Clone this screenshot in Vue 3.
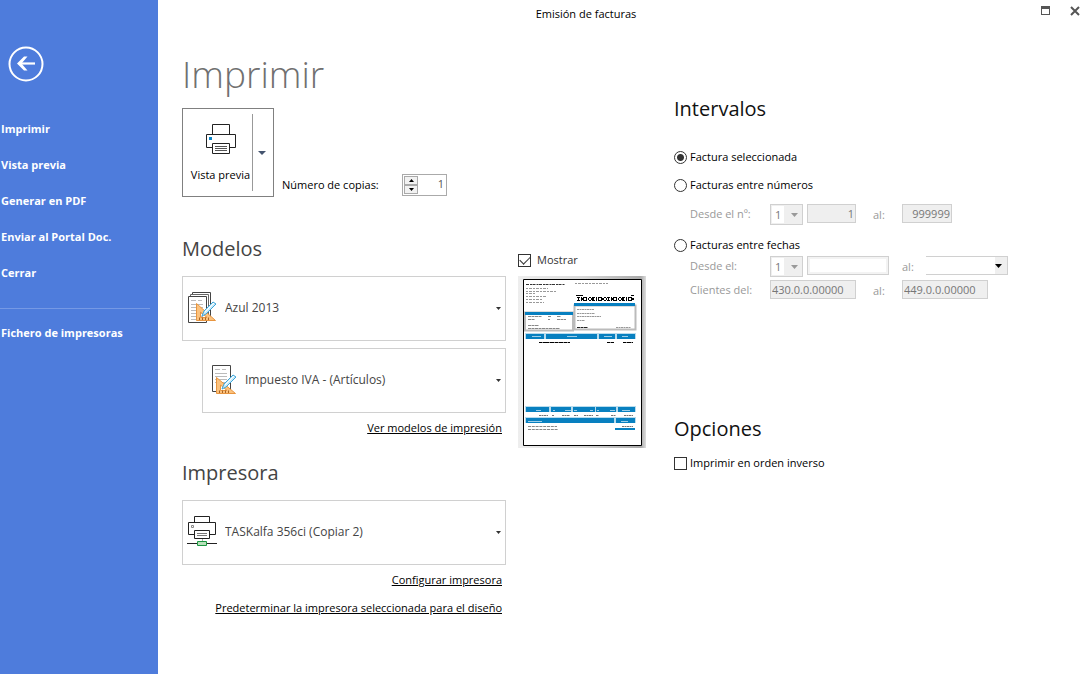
<script setup>
import { ref } from 'vue'

const menu = ['Imprimir', 'Vista previa', 'Generar en PDF', 'Enviar al Portal Doc.', 'Cerrar']
const copies = ref('1')
const showPreview = ref(true)
const range = ref('selected')
const reverse = ref(false)

const headCells = [
  [8, 53, 18], [28, 53, 51], [81, 53, 16], [99, 53, 18],
]
const totalCells = [
  [8, 127, 23], [33, 127, 20], [55, 127, 22], [78, 127, 20], [100, 127, 17],
]
const cellInk = [
  'M14 56.500h9', 'M49 56.500h10', 'M86 56.500h8', 'M104 56.500h6',
  'M18 130.500h5', 'M35 130.500h2M47 130.500h6', 'M56 130.500h3M72 130.500h3', 'M79 130.500h2M92 130.500h5', 'M104 130.500h8',
]
</script>

<template>
  <div class="window">
    <aside class="side">
      <button class="back" aria-label="Volver">
        <svg width="36" height="36" viewBox="0 0 36 36" fill="none" stroke="#fff">
          <circle cx="18" cy="18" r="16.500" stroke-width="2" />
          <path d="M27 17.500H11" stroke-width="2.200" />
          <path d="M9 17.500L16 10.500H19.500L13.500 17.500L19.500 24.500H16Z" fill="#fff" stroke="none" />
        </svg>
      </button>
      <nav class="menu">
        <a v-for="m in menu" :key="m" href="#">{{ m }}</a>
        <hr />
        <a href="#">Fichero de impresoras</a>
      </nav>
    </aside>

    <div class="page">
      <header class="bar">
        <span class="caption">Emisión de facturas</span>
        <div class="sys">
          <button aria-label="Maximizar">
            <svg width="9" height="9" viewBox="0 0 9 9"><path d="M0 0h9v9H0zM1 3v5h7V3z" fill="#555" fill-rule="evenodd" /></svg>
          </button>
          <button aria-label="Cerrar ventana">
            <svg width="10" height="10" viewBox="0 0 10 10"><path d="M1 1L9 9M9 1L1 9" stroke="#555" stroke-width="2" /></svg>
          </button>
        </div>
      </header>

      <main class="content">
        <section class="left">
          <h1>Imprimir</h1>
          <div class="print-row">
            <div class="split">
              <button class="print">
                <svg width="30" height="30" viewBox="0 0 30 30" fill="#fff" stroke="#222">
                  <path d="M6.500 10V.5h17V10" />
                  <path d="M.5 10.500h29v13H.5z" />
                  <path d="M6.500 19.500h17v10h-17z" />
                  <path d="M9 22.500h12M9 24.500h12M9 26.500h12" stroke="#555" />
                  <path d="M3 13h3v3H3z" fill="#0a84c8" stroke="none" />
                </svg>
                <span>Vista previa</span>
              </button>
              <button class="more" aria-label="Más opciones">
                <svg width="8" height="4" viewBox="0 0 8 4"><path d="M0 0h8L4 4z" fill="#44546f" /></svg>
              </button>
            </div>
            <label for="copies">Número de copias:</label>
            <div class="spin">
              <div class="steps">
                <button aria-label="Más copias"><svg width="5" height="3" viewBox="0 0 5 3"><path d="M0 3L2.500 0L5 3z" /></svg></button>
                <button aria-label="Menos copias"><svg width="5" height="3" viewBox="0 0 5 3"><path d="M0 0h5L2.500 3z" /></svg></button>
              </div>
              <input id="copies" v-model="copies" type="text" />
            </div>
          </div>

          <h2>Modelos</h2>
          <div class="combo">
            <svg class="icon" width="30" height="32" viewBox="0 0 30 32">
              <path d="M5.500 4V1.500h18V26" fill="#fff" stroke="#444" />
              <path d="M3.500 6V3.500h18V28" fill="#fff" stroke="#666" />
              <path d="M1.500 5.500h18v26h-18z" fill="#fff" stroke="#444" />
              <path d="M4 9.500h5M11 9.500h4M4 13.500h12M4 16.500h12M4 19.500h12M4 22.500h12M4 25.500h12M4 28.500h6" stroke="#bbb" />
              <path d="M9.500 12.500v17h19zM13.500 21l6.500 5.500h-6.500z" fill="#fbc27e" stroke="#e8953f" fill-rule="evenodd" />
              <path d="M12.500 29v-2.500M15.500 29v-2.500M18.500 29v-2.500M21.500 29v-2.500" stroke="#a96525" />
              <path d="M15 25l2-5L26 11l3 2L19 23z" fill="#c9ebfa" stroke="#3da4d8" />
              <path d="M18 21L27 12" stroke="#fff" />
            </svg>
            <select aria-label="Modelo"><option>Azul 2013</option></select>
            <svg class="arrow" width="5" height="3" viewBox="0 0 5 3"><path d="M0 0h5L2.500 3z" fill="#333" /></svg>
          </div>
          <div class="combo inset">
            <svg class="icon" width="30" height="32" viewBox="0 0 30 32">
              <path d="M5.500 2.500h18v26h-18z" fill="#fff" stroke="#444" />
              <path d="M8 6.500h5M15 6.500h4M8 10.500h12M8 13.500h12M8 16.500h12M8 19.500h12" stroke="#bbb" />
              <path d="M9.500 14.500v16h19zM13.500 22l6.500 5.500h-6.500z" fill="#fbc27e" stroke="#e8953f" fill-rule="evenodd" />
              <path d="M12.500 30v-2.500M15.500 30v-2.500M18.500 30v-2.500M21.500 30v-2.500" stroke="#a96525" />
              <path d="M15 26l2-5L26 12l3 2L19 24z" fill="#c9ebfa" stroke="#3da4d8" />
              <path d="M18 22L27 13" stroke="#fff" />
            </svg>
            <select aria-label="Diseño"><option>Impuesto IVA - (Artículos)</option></select>
            <svg class="arrow" width="5" height="3" viewBox="0 0 5 3"><path d="M0 0h5L2.500 3z" fill="#333" /></svg>
          </div>
          <a class="link models" href="#">Ver modelos de impresión</a>

          <h2>Impresora</h2>
          <div class="combo">
            <svg class="icon" width="30" height="32" viewBox="0 0 30 32" fill="#fff" stroke="#222">
              <path d="M7.500 7V1.500h15V7" />
              <path d="M1.500 7.500h27v12h-27z" />
              <path d="M7.500 15.500h15v8h-15z" />
              <path d="M10 18.500h10M10 20.500h10" stroke="#777" />
              <path d="M4.500 10.500h2v2h-2z" stroke="#888" />
              <path d="M15.500 24v3" stroke="#aaa" />
              <path d="M0 28.500h30" />
              <path d="M10.500 26.500h9v4h-9z" fill="#b7dfb9" stroke="#1a9641" />
            </svg>
            <select aria-label="Impresora"><option>TASKalfa 356ci (Copiar 2)</option></select>
            <svg class="arrow" width="5" height="3" viewBox="0 0 5 3"><path d="M0 0h5L2.500 3z" fill="#333" /></svg>
          </div>
          <a class="link" href="#">Configurar impresora</a>
          <a class="link" href="#">Predeterminar la impresora seleccionada para el diseño</a>
        </section>

        <section class="preview">
          <label class="tick show"><input v-model="showPreview" type="checkbox" />Mostrar</label>
          <svg v-if="showPreview" class="sheet" viewBox="0 0 128 172" fill="none">
            <defs>
              <linearGradient id="edge" x1="0" y1="0" x2="1" y2="0">
                <stop offset="0" stop-color="#eee" /><stop offset=".5" stop-color="#d8d8d8" /><stop offset=".96" stop-color="#aaa" /><stop offset="1" stop-color="#ddd" />
              </linearGradient>
            </defs>
            <path d="M0 0h128v172H0z" fill="url(#edge)" />
            <path d="M5.500 3.500h118v166H5.500z" fill="#fff" stroke="#000" />
            <path d="M8 8.500h39" stroke="#333" stroke-dasharray="3 1 2 .5" />
            <path d="M57 7.500h33M8 12.500h22M8 15.500h30M8 17.500h9M8 20.500h21M8 23.500h16M8 26.500h18" stroke="#999" stroke-dasharray="2 1 3 1" />
            <path d="M58 19.500h7M113 19.500h3" stroke="#000" />
            <path d="M59 21.500h57M59 24.500h57" stroke="#000" stroke-dasharray="3 1 1 1 4 2 2 1" />
            <path d="M60 23h56" stroke="#000" stroke-width="2" stroke-dasharray="1 2 3 2 1 1" />
            <path d="M7 36.500h48v18H7zM56.500 29.500h61v24h-61z" stroke="#bbb" stroke-width="2" />
            <path d="M7 36h48v3H7zM56 27h61v3H56z" fill="#0880c0" />
            <path d="M10 40.500h14M30 40.500h3M39 40.500h4M10 43.500h7M30 43.500h2M39 43.500h9M10 49.500h11M10 52.500h32" stroke="#888" stroke-dasharray="3 .5" />
            <path d="M59 33.500h17M59 37.500h18M59 40.500h24M59 44.500h8M98 51.500h15" stroke="#999" stroke-dasharray="2 .5" />
            <path d="M59 51.500h11" stroke="#222" stroke-dasharray="3 .5" />
            <path d="M7 57h111v6H7zM7 130h111v6H7zM7 141h111v6H7z" fill="#b8dcee" />
            <rect v-for="(c, i) in headCells" :key="'h' + i" :x="c[0]" :y="c[1] + 5" :width="c[2]" height="5" fill="#0880c0" />
            <rect v-for="(c, i) in totalCells" :key="'t' + i" :x="c[0]" :y="c[1] + 4" :width="c[2]" height="5" fill="#0880c0" />
            <path d="M8 142h88v5H8zM98 142h19v5H98zM97 152h20v2H97z" fill="#0880c0" />
            <g transform="translate(0 4)"><path v-for="d in cellInk" :key="d" :d="d" stroke="#9fcfe8" /></g>
            <path d="M21 66.500h7M28 66.500h24M89 66.500h7M105 66.500h10" stroke="#000" stroke-dasharray="3 .5 5 .5" />
            <path d="M21 139.500h9M34 139.500h2M44 139.500h8M56 139.500h4M66 139.500h9M78 139.500h3M93 139.500h5M106 139.500h9M104 150.500h11" stroke="#777" stroke-dasharray="2 .5" />
            <path d="M10 145.500h14M103 145.500h7" stroke="#9fcfe8" />
            <path d="M10 150.500h29M10 153.500h30" stroke="#888" stroke-dasharray="3 .8" />
          </svg>
        </section>

        <section class="right">
          <h2>Intervalos</h2>
          <label class="tick"><input v-model="range" type="radio" name="range" value="selected" />Factura seleccionada</label>
          <label class="tick"><input v-model="range" type="radio" name="range" value="numbers" />Facturas entre números</label>
          <div class="fields numbers">
            <label for="n-serie">Desde el nº:</label>
            <div class="mini"><select id="n-serie" disabled><option>1</option></select><svg width="7" height="4" viewBox="0 0 7 4"><path d="M0 0h7L3.500 4z" fill="#999" /></svg></div>
            <input class="num short" aria-label="Número inicial" value="1" disabled />
            <label class="to" for="n-end">al:</label>
            <input id="n-end" class="num mid" value="999999" disabled />
          </div>
          <label class="tick dates"><input v-model="range" type="radio" name="range" value="dates" />Facturas entre fechas</label>
          <div class="fields">
            <label for="d-serie">Desde el:</label>
            <div class="mini"><select id="d-serie" disabled><option>1</option></select><svg width="7" height="4" viewBox="0 0 7 4"><path d="M0 0h7L3.500 4z" fill="#999" /></svg></div>
            <input class="date" aria-label="Fecha inicial" disabled />
            <label class="to near" for="d-end">al:</label>
            <div class="drop"><select id="d-end" disabled><option></option></select><svg width="7" height="4" viewBox="0 0 7 4"><path d="M0 0h7L3.500 4z" /></svg></div>
          </div>
          <div class="fields">
            <label for="c-start">Clientes del:</label>
            <input id="c-start" class="client" value="430.0.0.00000" disabled />
            <label class="to" for="c-end">al:</label>
            <input id="c-end" class="client" value="449.0.0.00000" disabled />
          </div>

          <h2 class="options">Opciones</h2>
          <label class="tick"><input v-model="reverse" type="checkbox" />Imprimir en orden inverso</label>
        </section>
      </main>
    </div>
  </div>
</template>

<style>
body { margin: 0; background: #fff; }
</style>

<style scoped>
.window { display: flex; min-height: 100vh; background: #fff; color: #000; font: 11px/16px "Open Sans", "Noto Sans", sans-serif; }
.window * { box-sizing: border-box; }
button, input, select { margin: 0; font: inherit; color: inherit; border-radius: 0; }
button { padding: 0; border: 0; background: none; }
select { appearance: none; opacity: 1; }
svg { display: block; }
h1, h2 { margin: 0; font-weight: 400; }

.side { flex: none; width: 158px; padding-top: 46px; background: #4e7cdc; color: #fff; }
.back { display: block; margin-left: 8px; }
.menu { display: flex; flex-direction: column; gap: 20px; margin-top: 39px; font-weight: 700; }
.menu a { padding-left: 1px; color: #fff; text-decoration: none; }
.menu hr { width: 150px; margin: 7px 0 -4px; border: 0; border-top: 1px solid #7599e5; }

.page { flex: 1; min-width: 0; }
.bar { display: flex; height: 28px; align-items: center; }
.caption { flex: 1; text-align: center; }
.sys { display: flex; width: 75px; gap: 20px; padding: 0 9px 7px 0; align-items: center; justify-content: flex-end; }

.content { display: flex; align-items: flex-start; padding-left: 24px; }
.left { display: flex; flex-direction: column; width: 324px; }
h1 { margin-top: 20px; height: 60px; font-size: 37px; line-height: 52px; font-weight: 300; color: #707070; }
h2 { font-size: 20px; line-height: 28px; color: #444; }
.print-row { display: flex; align-items: flex-end; margin-bottom: 38px; }
.split { display: flex; width: 92px; height: 89px; margin-right: 8px; padding: 5px 0; border: 1px solid #808080; }
.print { display: flex; flex-direction: column; align-items: center; gap: 13px; width: 70px; padding: 10px 0 0 6px; border-right: 1px solid #999; white-space: nowrap; }
.more { display: flex; flex: 1; align-items: center; justify-content: center; padding-right: 2px; }
.print-row > label { width: 120px; padding-bottom: 4px; }
.spin { display: flex; width: 45px; height: 22px; margin-bottom: 1px; padding: 1px; border: 1px solid #aaa; }
.steps { display: flex; flex: none; flex-direction: column; width: 14px; }
.steps button { display: flex; flex: 1; align-items: center; justify-content: center; border: 1px solid #aaa; background: #f2f2f2; }
.spin input { flex: 1; min-width: 0; padding: 0 1px 2px; border: 0; text-align: right; color: #555; }

.combo { position: relative; height: 65px; margin-top: 13px; color: #444; }
.combo select { width: 100%; height: 100%; padding: 0 20px 2px 42px; border: 1px solid #d0d0d0; background: #fff; font-size: 12px; }
.combo .icon { position: absolute; left: 5px; top: 15px; pointer-events: none; }
.combo .arrow { position: absolute; right: 5px; top: 31px; pointer-events: none; }
.combo.inset { margin: 7px 0 0 20px; }
.link { align-self: flex-end; margin: 7px 4px 5px 0; color: #000; text-decoration: underline; }
.link.models { margin-bottom: 23px; }

.preview { width: 128px; margin: 224px 28px 0 12px; }
.sheet { width: 128px; margin-top: 8px; }
.tick { display: flex; align-items: center; gap: 3px; height: 16px; }
.tick input { flex: none; display: grid; place-items: center; width: 13px; height: 13px; appearance: none; border: 1px solid #333; background: #fff; }
.tick input[type="radio"] { border-radius: 50%; }
.tick input[type="radio"]:checked { background: radial-gradient(circle, #333 0 3px, #fff 4px); }
.tick input[type="checkbox"]:checked::before { content: ""; width: 9px; height: 5px; border: solid #333; border-width: 0 0 1px 1px; transform: translateY(-1px) rotate(-45deg); }
.show { gap: 6px; color: #333; }

.right { flex: 1; min-width: 0; padding-top: 67px; }
.right h2 { margin-bottom: 26px; color: #111; }
.right .tick { margin-bottom: 12px; }
.fields { display: flex; align-items: flex-start; margin: 0 0 3px 16px; color: #999; }
.fields label { width: 80px; padding-top: 2px; }
.fields .to { width: 46px; padding-top: 3px; padding-left: 17px; }
.fields .near { width: 37px; padding-left: 13px; }
.fields input { height: 19px; padding: 0 3px 1px; border: 1px solid #d0d0d0; background: #efefef; color: #777; }
.fields .num { padding-right: 1px; text-align: right; }
.short { width: 49px; }
.mid { width: 50px; }
.fields .date { width: 82px; background: #fff; box-shadow: inset 0 0 0 2px #f3f3f3; }
.fields .client { width: 86px; padding: 0 1px 1px; }
.mini, .drop { position: relative; width: 33px; height: 21px; margin-right: 4px; border: 1px solid #d0d0d0; background: #efefef; color: #777; }
.mini select { width: 12px; height: 17px; margin: 1px; padding: 0 3px; border: 0; background: #fff; display: block; color: #777; }
.mini svg { position: absolute; right: 4px; top: 8px; }
.drop { width: 82px; height: 19px; border-left: 0; }
.drop select { display: block; width: 69px; height: 17px; border: 0; background: #fff; }
.drop svg { position: absolute; right: 5px; top: 7px; }
.fields.numbers { margin-top: -1px; margin-bottom: 12px; }
.right .dates { margin-bottom: 3px; }
.right .options { margin: 116px 0 12px; }
</style>
